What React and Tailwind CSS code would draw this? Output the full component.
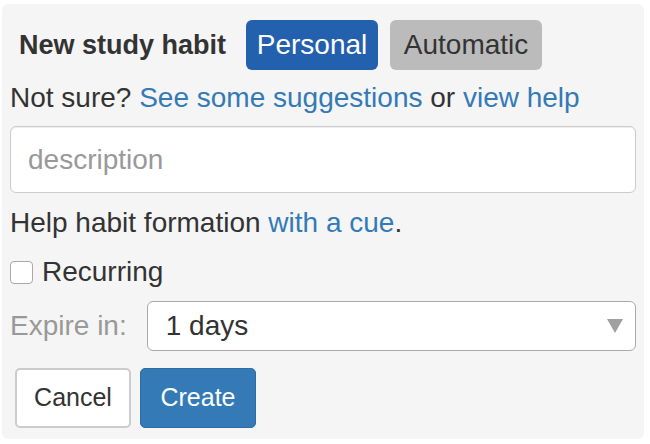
import React from "react";

export default function App() {
  return (
    <div className="w-[650px] h-[444px] bg-white pt-[4px] pl-[2px] font-['Liberation_Sans',Arial,sans-serif] text-[#333]">
      <div className="w-[642px] h-[435px] bg-[#f5f5f5] rounded-[6px] px-[8px] pt-[16px] flex flex-col">
        <div className="flex items-center h-[50px] pl-[9px]">
          <span className="text-[27px] font-bold leading-[32px] text-[#333]">New study habit</span>
          <div className="ml-[20px] w-[132px] h-[50px] rounded-[6px] bg-[#2360ae] text-white text-[28px] leading-[32px] flex items-center justify-center">
            Personal
          </div>
          <div className="ml-[12px] w-[152px] h-[50px] rounded-[6px] bg-[#bbbbbb] text-[#333] text-[28px] leading-[32px] flex items-center justify-center">
            Automatic
          </div>
        </div>

        <div className="mt-[12px] text-[28px] leading-[32px] whitespace-nowrap">
          Not sure? <span className="text-[#337ab7]">See some suggestions</span> or{" "}
          <span className="text-[#337ab7]">view help</span>
        </div>

        <input
          readOnly
          placeholder="description"
          className="mt-[12px] w-[626px] h-[67px] rounded-[6px] border border-[#cccccc] bg-white px-[17px] text-[28px] text-[#333] placeholder:text-[#999] shadow-[inset_0_1px_1px_rgba(0,0,0,0.075)] outline-none"
        />

        <div className="mt-[14px] text-[28px] leading-[32px] whitespace-nowrap">
          Help habit formation <span className="text-[#337ab7]">with a cue</span>.
        </div>

        <div className="mt-[17px] flex items-center h-[32px]">
          <div className="w-[23px] h-[23px] rounded-[4px] border border-[#a9a9a9] bg-white" />
          <span className="ml-[9px] text-[28px] leading-[32px]">Recurring</span>
        </div>

        <div className="mt-[13px] flex items-center h-[50px]">
          <span className="text-[28px] leading-[32px] text-[#999]">Expire in:</span>
          <div className="ml-[20px] flex-1 h-[50px] rounded-[6px] border border-[#aaaaaa] bg-white flex items-center pl-[18px] pr-[12px]">
            <span className="flex-1 text-[28px] leading-[32px] text-[#333]">1 days</span>
            <svg width="16" height="14" viewBox="0 0 16 14">
              <polygon points="0,0 16,0 8,14" fill="#a0a0a0" />
            </svg>
          </div>
        </div>

        <div className="mt-[17px] pl-[5px] flex gap-[9px]">
          <div className="w-[116px] h-[60px] rounded-[5px] border-2 border-[#cccccc] bg-white flex items-center justify-center text-[25px] text-[#333]">
            Cancel
          </div>
          <div className="w-[116px] h-[60px] rounded-[5px] bg-[#337ab7] border border-[#2e6da4] flex items-center justify-center text-[25px] text-white">
            Create
          </div>
        </div>
      </div>
    </div>
  );
}
